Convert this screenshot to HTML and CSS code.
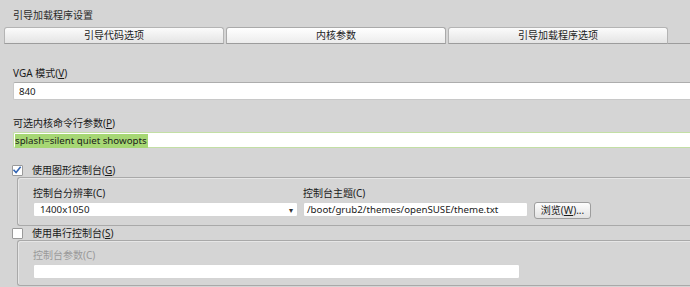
FILE: index.html
```html
<!DOCTYPE html>
<html lang="zh-CN">
<head>
<meta charset="utf-8">
<title>引导加载程序设置</title>
<link rel="stylesheet" href="styles.css">
</head>
<body>
<div class="page">
  <div class="title">引导加载程序设置</div>
  <div class="tabs">
    <div class="tab">引导代码选项</div>
    <div class="tab active">内核参数</div>
    <div class="tab">引导加载程序选项</div>
    <div class="tab-rest"></div>
  </div>
  <div class="panel">
    <div class="label vga-label">VGA 模式(<u>V</u>)</div>
    <div class="input wide vga-input"><span class="val">840</span></div>

    <div class="label cmd-label">可选内核命令行参数(<u>P</u>)</div>
    <div class="input wide cmd-input"><span class="sel val">splash=silent quiet showopts</span></div>

    <div class="check-row first-check">
      <span class="checkbox">
        <svg width="11" height="11" viewBox="0 0 11 11"><path d="M2.2 5.2 L4.5 7.8 L9 2" fill="none" stroke="#3466b4" stroke-width="1.7" stroke-linecap="square"/></svg>
      </span>
      <span class="check-text">使用图形控制台(<u>G</u>)</span>
    </div>
    <div class="group group-gfx">
      <div class="col col-res">
        <div class="label">控制台分辨率(C)</div>
        <div class="input combo"><span class="val">1400x1050</span><span class="arrow">▾</span></div>
      </div>
      <div class="col col-theme">
        <div class="label">控制台主题(C)</div>
        <div class="theme-row">
          <div class="input theme-input"><span class="val">/boot/grub2/themes/openSUSE/theme.txt</span></div>
          <div class="button">浏览(<u>W</u>)...</div>
        </div>
      </div>
    </div>

    <div class="check-row second-check">
      <span class="checkbox"></span>
      <span class="check-text">使用串行控制台(<u>S</u>)</span>
    </div>
    <div class="group group-serial">
      <div class="label disabled">控制台参数(C)</div>
      <div class="input serial-input"></div>
    </div>
  </div>
</div>
</body>
</html>
```
FILE: styles.css
```css
html, body {
  margin: 0;
  padding: 0;
}
body {
  background: #d5d5d5;
  overflow: hidden;
  width: 690px;
  height: 287px;
  font-family: "Noto Sans", "Noto Sans CJK SC", sans-serif;
  font-size: 10px;
  color: #1a1a1a;
}
u {
  text-decoration: underline;
  text-underline-offset: 1px;
}
.page {
  width: 690px;
}
.title {
  padding: 9px 0 0 13px;
  height: 13px;
  line-height: 12px;
  color: #2a2a2a;
}
.tabs {
  display: flex;
  margin-top: 5px;
  padding-left: 4px;
  align-items: flex-end;
}
.tab {
  width: 218px;
  height: 15px;
  line-height: 15px;
  text-align: center;
  border: 1px solid #b4b4b4;
  border-bottom: 1px solid #9c9c9c;
  border-radius: 3px 3px 0 0;
  background: linear-gradient(#fbfbfb, #e4e4e4);
  margin-right: 2px;
  color: #1e1e1e;
}
.tab.active {
  background: linear-gradient(#ffffff, #ececec);
  border-color: #aaaaaa;
  border-bottom-color: #9c9c9c;
}
.tab-rest {
  flex: 1;
  height: 0;
  border-bottom: 1px solid #9c9c9c;
  margin-left: -2px;
}
.panel {
  padding-left: 13px;
}
.label {
  height: 12px;
  line-height: 12px;
}
.val {
  font-size: 9.7px;
}
.vga-label {
  margin-top: 23px;
}
.input {
  background: #fff;
  border: 1px solid #c8c8c8;
  border-top-color: #adadad;
  border-radius: 2px;
  box-sizing: border-box;
  padding-left: 4px;
  white-space: nowrap;
}
.input.wide {
  border-right: none;
  border-radius: 2px 0 0 2px;
}
.vga-input {
  margin-top: 3px;
  height: 18px;
  line-height: 16px;
  padding-left: 5px;
}
.cmd-label {
  margin-top: 17px;
}
.cmd-input {
  margin-top: 3px;
  height: 16px;
  line-height: 14px;
  border-color: #c3dfa5;
  padding-left: 1px;
}
.sel {
  background: #a6d774;
  display: inline-block;
  line-height: 14px;
  padding-right: 1px;
}
.check-row {
  display: flex;
  align-items: center;
  height: 12px;
  margin-left: -1px;
}
.first-check {
  margin-top: 16px;
}
.second-check {
  margin-top: 1px;
}
.checkbox {
  width: 11px;
  height: 11px;
  box-sizing: border-box;
  border: 1px solid #9a9a9a;
  background: #fff;
  border-radius: 1px;
  display: flex;
}
.checkbox svg {
  margin: -1px 0 0 -1px;
}
.check-text {
  margin-left: 9px;
  line-height: 12px;
}
.group {
  margin-left: 4px;
  border: 1px solid #a9a9a9;
  border-right: none;
  border-radius: 3px 0 0 3px;
  box-shadow: inset 1px 1px 0 #e6e6e6;
}
.group-gfx {
  margin-top: 1px;
  height: 49px;
  box-sizing: border-box;
  display: flex;
  padding: 9px 0 0 15px;
}
.col .label {
  margin-bottom: 3px;
}
.col-res {
  width: 265px;
  margin-right: 5px;
}
.combo {
  height: 15px;
  line-height: 13px;
  position: relative;
  border-color: #d4d4d4;
  padding-left: 6px;
}
.arrow {
  position: absolute;
  right: 4px;
  top: 0;
  font-size: 8px;
  line-height: 13px;
  color: #333;
}
.theme-row {
  display: flex;
  align-items: flex-start;
}
.theme-input {
  width: 225px;
  height: 15px;
  line-height: 13px;
  padding-left: 3px;
  border-color: #d4d4d4;
}
.button {
  margin-left: 6px;
  width: 57px;
  height: 17px;
  box-sizing: border-box;
  border: 1px solid #9d9d9d;
  border-radius: 3px;
  background: linear-gradient(#fdfdfd, #e2e2e2);
  text-align: center;
  line-height: 14px;
}
.group-serial {
  margin-top: 1px;
  height: 46px;
  box-sizing: border-box;
  padding: 8px 0 0 15px;
}
.disabled {
  color: #9a9a9a;
}
.serial-input {
  margin-top: 3px;
  width: 487px;
  height: 15px;
  border-color: #d4d4d4;
}
```
